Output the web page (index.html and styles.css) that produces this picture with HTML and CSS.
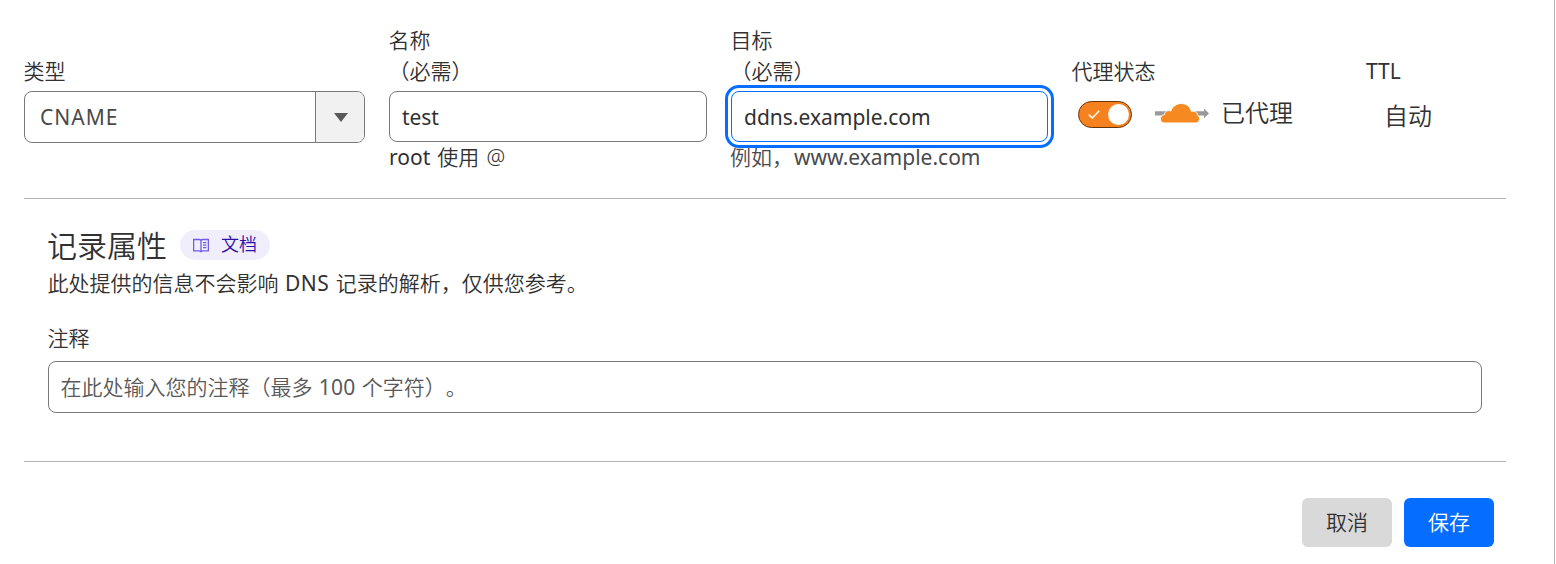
FILE: index.html
```html
<!DOCTYPE html>
<html lang="zh-CN">
<head>
<meta charset="utf-8">
<title>DNS</title>
<link rel="stylesheet" href="styles.css">
</head>
<body>
<form class="panel">
  <div class="record">
    <div class="field">
      <label class="label">类型</label>
      <div class="select">
        <span class="select-value">CNAME</span>
        <span class="select-toggle"><svg width="14" height="9" viewBox="0 0 14 9"><path d="M0 0h14L7 9z" fill="#595959"/></svg></span>
      </div>
    </div>
    <div class="field">
      <label class="label">名称<br>（必需）</label>
      <div class="input name-input"><span>test</span></div>
      <div class="help"><span class="root">root</span> 使用 <span class="at">@</span></div>
    </div>
    <div class="field">
      <label class="label">目标<br>（必需）</label>
      <div class="input focused"><span>ddns.example.com</span></div>
      <div class="help soft">例如，<span class="domain">www.example.com</span></div>
    </div>
    <div class="field">
      <label class="label">代理状态</label>
      <div class="proxy">
        <span class="toggle">
          <svg class="check" width="12" height="9" viewBox="0 0 12 9"><path d="M.8 4.6L4.2 8 11.2.8" fill="none" stroke="#fff" stroke-width="1.5"/></svg>
          <span class="knob"></span>
        </span>
        <svg class="cloud" width="54" height="21" viewBox="0 0 54 21">
          <path d="M0 8.2h49V5.600l5 4.800-5 4.800v-2.800H0z" fill="#999"/>
          <path d="M9.500 20C7 20 5.500 18.300 5.500 15.900c0-2.300 1.500-4.100 3.900-4.300.6-3.700 3.600-4.600 6.400-3.600C17.600 3.300 21.500.5 26.300.5c5.200 0 9.200 3.400 10.200 8.200 3-1.100 6.100.6 6 3.500 1.700.8 2.200 2.500 2 4.200-.3 2.200-1.800 3.600-4 3.600z" fill="#f6891f" stroke="#fff" stroke-width="1"/>
        </svg>
        <span class="status">已代理</span>
      </div>
    </div>
    <div class="field">
      <label class="label ttl">TTL</label>
      <div class="auto">自动</div>
    </div>
  </div>

  <section class="attributes">
    <div class="heading">
      <h2 class="title">记录属性</h2>
      <a class="docs">
        <svg width="16" height="15" viewBox="0 0 16 15" fill="none" stroke="#6f5ce8" stroke-width="1.3"><path d="M.6 1.500h5.600Q7.500 1.500 8 2.300q.5-.8 1.800-.8h5.600v11.300H9.800q-1.300 0-1.800.8-.5-.8-1.800-.8H.6zM8 2.300v11.300M10 4.600h3.400M10 7.100h3.400M10 9.600h3.400"/></svg>
        <span>文档</span>
      </a>
    </div>
    <p class="description">此处提供的信息不会影响 <span class="dns">DNS</span> 记录的解析，仅供您参考。</p>
    <label class="comment-label">注释</label>
    <div class="input comment"><span>在此处输入您的注释（最多 <span class="limit">100</span> 个字符）。</span></div>
  </section>

  <div class="actions">
    <button type="button" class="button">取消</button>
    <button type="button" class="button primary">保存</button>
  </div>
</form>
</body>
</html>
```

FILE: styles.css
```css
* { box-sizing: border-box; }
body {
  margin: 0;
  background: #fff;
  color: #313131;
  font-family: "Noto Sans", "Noto Sans CJK SC DemiLight", "Noto Sans CJK SC", sans-serif;
  font-size: 21px;
  line-height: 31px;
  font-weight: 350;
  text-spacing-trim: space-all;
}
.panel {
  width: 1555px;
  height: 564px;
  padding: 25px 48px 0 24px;
  border-right: 1px solid #b4b4b4;
  overflow: hidden;
}
.record {
  display: grid;
  grid-template-columns: 341px 318px 317px 270px 1fr;
  column-gap: 24px;
  height: 174px;
  border-bottom: 1px solid #b4b4b4;
}
.field { min-width: 0; white-space: nowrap; }
.label {
  display: flex;
  flex-direction: column;
  justify-content: flex-end;
  height: 62px;
  margin: 0 0 4px -0.6px;
}
.select {
  display: flex;
  height: 52px;
  border: 1px solid #797979;
  border-radius: 8px;
  overflow: hidden;
}
.select-value {
  flex: 1;
  padding-left: 15px;
  line-height: 51px;
  color: #4a4a4a;
  font-weight: 400;
  letter-spacing: 1px;
}
.select-toggle {
  display: flex;
  align-items: center;
  justify-content: center;
  width: 49px;
  background: #f1f1f1;
  border-left: 1px solid #797979;
  padding: 1px 0 0 1px;
}
.input {
  height: 51px;
  padding: 0 12px;
  border: 1px solid #797979;
  border-radius: 8px;
  line-height: 51px;
  font-weight: 400;
}
.name-input { letter-spacing: -0.1px; }
.focused {
  border-color: #056dff;
  outline: 3px solid #056dff;
  outline-offset: 3px;
}
.help { line-height: 31px; word-spacing: 1.6px; }
.soft { color: #4a4a4a; margin-left: -1px; }
.domain { margin-left: 1px; }
.root, .domain, .dns { font-weight: 400; }
.proxy { display: flex; height: 48px; padding-left: 6px; }
.toggle {
  display: flex;
  align-items: center;
  justify-content: space-between;
  width: 54px;
  height: 27px;
  margin-top: 10px;
  padding: 0 2px 0 9px;
  border: 1px solid #66370c;
  border-radius: 14px;
  background: #f6821f;
}
.knob { width: 21px; height: 21px; border-radius: 50%; background: #fff; }
.cloud { margin: 12px 12px 0 23px; }
.status { font-size: 24px; line-height: 43px; }
.auto { padding-left: 18px; font-size: 24px; line-height: 49px; }
.ttl { font-weight: 400; margin-left: 0; }
.attributes {
  height: 263px;
  padding: 29px 24px 0;
  border-bottom: 1px solid #b4b4b4;
}
.heading { display: flex; height: 38px; }
.title { margin: 0 1px 0 -1px; font-size: 30px; line-height: 35px; font-weight: 350; }
.docs {
  display: flex;
  align-items: center;
  gap: 12px;
  width: 90px;
  height: 30px;
  margin: 2px 0 0 12px;
  padding-left: 13px;
  border-radius: 15px;
  background: #f1eefc;
  color: #2c0fa8;
  font-size: 18px;
  line-height: 28px;
}
.docs span { margin-top: -2px; }
.description { margin: 2px 0 0 -0.6px; line-height: 31px; word-spacing: 1px; }
.dns { letter-spacing: 0.5px; }
.comment-label { display: block; margin: 24px 0 0 -0.6px; line-height: 31px; }
.comment { height: 52px; margin-top: 7px; padding-left: 11.4px; color: #595959; font-weight: 350; word-spacing: 0.8px; }
.limit { font-weight: 400; letter-spacing: 0.3px; }
.actions {
  display: flex;
  justify-content: flex-end;
  gap: 12px;
  padding: 36px 12px 0 0;
}
.button {
  width: 90px;
  height: 49px;
  padding: 0;
  border: 0;
  border-radius: 6px;
  background: #d9d9d9;
  color: #313131;
  font: inherit;
}
.primary { background: #056dff; color: #fff; }
```
